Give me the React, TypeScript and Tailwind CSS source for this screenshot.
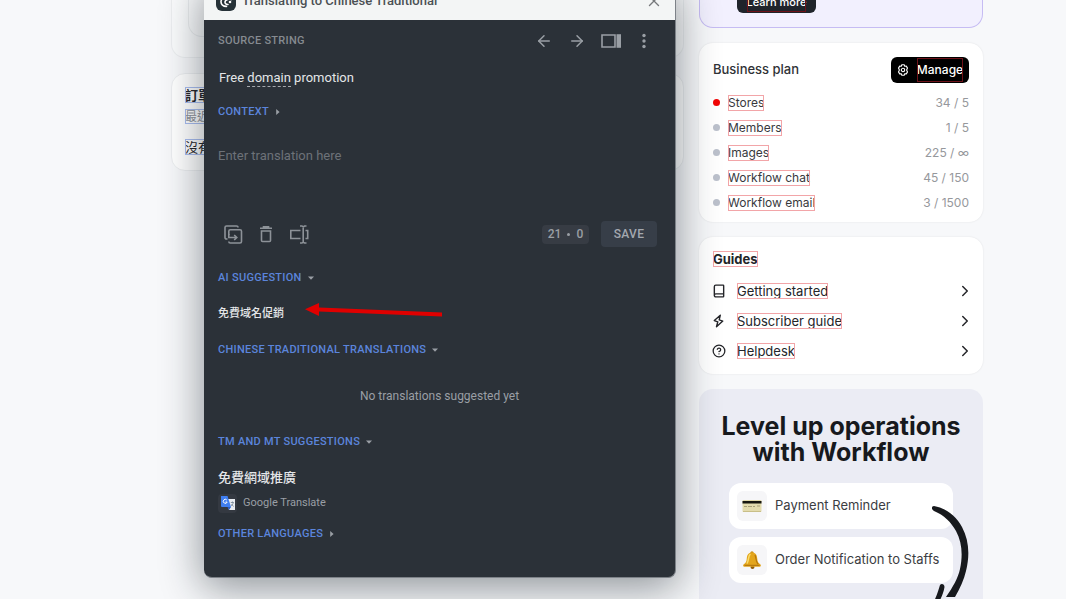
import type { ReactNode } from "react"
import { ArrowLeft, ArrowRight, Book, ChevronRight, CircleHelp, X } from "lucide-react"

interface Usage {
    name: string
    value: string
    over?: boolean
}

const usages: Usage[] = [
    { name: 'Stores', value: '34 / 5', over: true },
    { name: 'Members', value: '1 / 5' },
    { name: 'Images', value: '225 / ∞' },
    { name: 'Workflow chat', value: '45 / 150' },
    { name: 'Workflow email', value: '3 / 1500' },
]

const Bolt = () => (
    <svg className="w-3.5 h-3.5" viewBox="0 0 14 14" fill="none" stroke="currentColor" strokeWidth="1.400" strokeLinejoin="round">
        <path d="M8.300 1.200 2.300 6.600l3.500 1.200-1.300 4.900 6.300-5.600-3.600-1.200z" />
    </svg>
)

const guides = [
    { name: 'Getting started', icon: <Book className="w-3.5 h-3.5" strokeWidth={2.4} /> },
    { name: 'Subscriber guide', icon: <Bolt /> },
    { name: 'Helpdesk', icon: <CircleHelp className="w-3.5 h-3.5" strokeWidth={2.2} /> },
]

// Outline that the in-context editor puts round every string
const Untranslated = ({ children }: { children: ReactNode }) => (
    <span className="outline outline-1 -outline-offset-1 outline-[#f2a5a8] leading-4">{children}</span>
)

const Translated = ({ children }: { children: ReactNode }) => (
    <span className="outline outline-1 -outline-offset-1 outline-[#a9bdf0]">{children}</span>
)

const SectionToggle = ({ title, open, className }: { title: string, open?: boolean, className: string }) => (
    <button aria-expanded={!!open} className={`flex items-center gap-1.5 text-[11px] font-medium tracking-wide text-[#5b85dc] ${className}`}>
        {title}
        <svg className="w-1.5 h-1.5 text-[#9a9fa5]" viewBox="0 0 6 6" fill="currentColor">
            <path d={open ? 'M0 1.500h6L3 4.700z' : 'M1.200 0v6l3.400-3z'} />
        </svg>
    </button>
)

const EditorDialog = () => (
    <section role="dialog" aria-label="Translation editor" className="absolute z-10 -top-[18px] left-[33px] right-2 rounded-lg bg-[#2b3138] text-[#9a9fa5] font-[Roboto,'Noto_Sans_CJK_TC',sans-serif] shadow-[0_8px_40px_2px_rgba(20,30,40,0.46)] border-r border-b border-[#7d8288] overflow-hidden">
        <header className="h-[38px] bg-[#f3f5f5] flex items-center pl-3 pr-3">
            <span className="w-5 h-5 rounded-md bg-[#263238] flex items-center justify-center">
                <svg className="w-4 h-4" viewBox="0 0 16 16" fill="none">
                    <path d="M13 4.500C8.500 2.500 3.500 4.500 3 8.500c-.2 2.800 2.200 5 5.500 4.900" stroke="#fff" strokeWidth="1.600" strokeLinecap="round" />
                    <path d="M13.500 6.500C10 5.500 7 7 7 9.200c0 1.500 1.200 2.400 3 2.300" stroke="#fff" strokeWidth="1.600" strokeLinecap="round" />
                    <circle cx="12" cy="9" r="1.300" fill="#fff" />
                </svg>
            </span>
            <h1 className="ml-1.5 flex-1 text-[13px] font-medium text-[#4b5054]">Translating to Chinese Traditional</h1>
            <button aria-label="Close" className="text-[#77797c]"><X className="w-[18px] h-[18px]" strokeWidth={1.8} /></button>
        </header>

        <div className="h-[42px] pl-3.5 pr-[23px] flex items-center justify-between">
            <h2 className="text-[11px] font-medium tracking-wide text-[#868b91]">SOURCE STRING</h2>
            <div className="flex items-center gap-[15px]">
                <button aria-label="Previous"><ArrowLeft className="w-[18px] h-[18px]" strokeWidth={2} /></button>
                <button aria-label="Next"><ArrowRight className="w-[18px] h-[18px]" strokeWidth={2} /></button>
                <button aria-label="Toggle panel">
                    <svg className="w-5 h-3.5" viewBox="0 0 20 14">
                        <path d="M1 1h13v12H1z" fill="none" stroke="currentColor" strokeWidth="1.600" />
                        <path d="M15.500 .2H20v13.600h-4.500z" fill="currentColor" />
                    </svg>
                </button>
                <button aria-label="More" className="px-1.5">
                    <svg className="w-1 h-4" viewBox="0 0 4 16" fill="currentColor">
                        <circle cx="2" cy="2.500" r="1.700" />
                        <circle cx="2" cy="8" r="1.700" />
                        <circle cx="2" cy="13.500" r="1.700" />
                    </svg>
                </button>
            </div>
        </div>

        <p className="h-8 px-[15px] flex items-center text-[13px] leading-4 text-[#e4e6e8] whitespace-pre">
            Free <span className="-mb-px border-b border-dashed border-[#a5a9ae]">domain</span> promotion
        </p>
        <SectionToggle title="CONTEXT" className="h-9 px-3.5" />

        <textarea aria-label="Translation" placeholder="Enter translation here" className="block w-full h-[84px] px-3.5 pt-4 text-[13px] leading-5 resize-none bg-transparent outline-none placeholder:text-[#6d7278]" />

        <div className="h-10 pl-5 pr-[18px] flex items-center">
            <div className="flex items-center gap-[15px] text-[#8d9298]">
                <button aria-label="Copy source">
                    <svg className="w-[19px] h-[19px]" viewBox="0 0 19 19" fill="none" stroke="currentColor" strokeWidth="1.600">
                        <path d="M3.500 14H2.500A1.500 1.500 0 0 1 1 12.500v-10A1.500 1.500 0 0 1 2.500 1h10A1.500 1.500 0 0 1 14 2.500" />
                        <path d="M4.800 10V6.300a1.500 1.500 0 0 1 1.500-1.500h9.700a1.500 1.500 0 0 1 1.500 1.500v10.200A1.500 1.500 0 0 1 16 18H6.300a1.500 1.500 0 0 1-1.500-1.500" />
                        <path d="M4.800 9v3.500h8M10.200 10l2.600 2.500-2.600 2.500" />
                    </svg>
                </button>
                <button aria-label="Clear">
                    <svg className="w-4 h-[18px]" viewBox="0 0 16 18" fill="none" stroke="currentColor" strokeWidth="1.600">
                        <path d="M2 3.200h12M5.500 2.500V1.800h5v.7M3.500 6v9.500a1 1 0 0 0 1 1h7a1 1 0 0 0 1-1V6z" />
                    </svg>
                </button>
                <button aria-label="Select text">
                    <svg className="w-5 h-[19px]" viewBox="0 0 20 19" fill="none" stroke="currentColor" strokeWidth="1.600">
                        <path d="M11.500 5.500H1.800v8h9.700M16.500 5.500h2.200v8h-2.200M14.200 1.500v16M11 1h2l1.200 1 1.300-1h2M11 18h2l1.200-1 1.300 1h2" />
                    </svg>
                </button>
            </div>
            <span className="ml-auto w-[47px] h-[19px] rounded bg-[#373c44] flex items-center justify-center gap-1.5 text-xs font-medium">
                <span>21</span><span className="w-[3px] h-[3px] rounded-full bg-[#9a9fa5]" /><span>0</span>
            </span>
            <button className="ml-3 w-14 h-[26px] rounded-sm bg-[#373e48] text-xs font-medium tracking-wide text-[#a3a8af]">SAVE</button>
        </div>

        <SectionToggle title="AI SUGGESTION" open className="h-12 px-3.5" />
        <p className="h-6 px-3.5 flex items-center text-[11px] font-medium text-[#e4e6e8]">免費域名促銷</p>
        <SectionToggle title="CHINESE TRADITIONAL TRANSLATIONS" open className="h-12 px-3.5" />
        <p className="h-11 flex items-center justify-center text-xs">No translations suggested yet</p>
        <SectionToggle title="TM AND MT SUGGESTIONS" open className="h-12 px-3.5" />
        <p className="h-6 px-3.5 flex items-center text-[13px] font-medium text-[#e4e6e8]">免費網域推廣</p>
        <p className="h-[26px] px-3.5 flex items-center gap-1.5 text-[11px]">
            <span className="w-[19px] h-[19px] bg-[#343941] rounded-sm flex items-center justify-center">
                <svg className="w-3.5 h-3.5" viewBox="0 0 14 14">
                    <path d="M5 3h9v11H8z" fill="#e9edf2" />
                    <path d="M0 0h6.500L10 11H1a1 1 0 0 1-1-1z" fill="#3f7ef0" />
                    <path d="M6.500 11H10l-2 3z" fill="#2759c4" />
                    <path d="M5.800 4A2 2 0 1 0 6.200 6H4.500" fill="none" stroke="#fff" strokeWidth="1" />
                    <path d="M9.800 6.500h3M11.500 5.500v1M12.300 6.500c-.4 1.800-1.300 2.800-2.300 3.500M10.500 8l2 2.500" fill="none" stroke="#70808f" strokeWidth=".8" />
                </svg>
            </span>
            Google Translate
        </p>
        <SectionToggle title="OTHER LANGUAGES" className="h-9 px-3.5 mb-[25px]" />
    </section>
)

const PlanCard = () => (
    <section className="rounded-[14px] bg-white shadow-[0_0_2px_rgba(0,0,0,0.1)] px-3.5 pt-3.5 pb-[7px]">
        <div className="flex items-center justify-between">
            <h2 className="text-[13px] font-medium text-[#303236]">Business plan</h2>
            <button className="h-[26px] w-[78px] rounded-md bg-black text-white text-xs font-medium flex items-center justify-center gap-2">
                <svg className="w-3 h-3" viewBox="0 0 12 12" fill="none" stroke="currentColor" strokeWidth="1.100">
                    <path d="M4.800.8h2.400l.5 1.400 1.600-.1 1.200 2L9.600 6l.9 1.900-1.200 2-1.600-.1-.5 1.400H4.800l-.5-1.400-1.600.1-1.200-2L2.400 6l-.9-1.900 1.200-2 1.600.1z" strokeLinejoin="round" />
                    <circle cx="6" cy="6" r="1.700" />
                </svg>
                <span className="outline outline-1 -outline-offset-1 outline-[#6e1219] leading-6">Manage</span>
            </button>
        </div>
        <ul className="mt-[7px] text-xs text-[#38393d]">
            {usages.map((usage) => (
                <li key={usage.name} className="h-[25px] flex items-center">
                    <span className={`w-[7px] h-[7px] mr-2 rounded-full ${usage.over ? 'bg-[#f20505]' : 'bg-[#bcc1cc]'}`} />
                    <Untranslated>{usage.name}</Untranslated>
                    <span className="ml-auto text-[#96989c]">{usage.value}</span>
                </li>
            ))}
        </ul>
    </section>
)

const GuidesCard = () => (
    <section className="rounded-[14px] bg-white shadow-[0_0_2px_rgba(0,0,0,0.1)] px-3.5 pt-3 pb-2 text-[#242529]">
        <h2 className="text-[13px] leading-5 font-bold"><Untranslated>Guides</Untranslated></h2>
        <ul className="mt-[7px]">
            {guides.map((guide) => (
                <li key={guide.name}>
                    <a href="#" className="h-[30px] flex items-center text-[13px]">
                        <span className="w-[25px] flex -ml-px">{guide.icon}</span>
                        <Untranslated>{guide.name}</Untranslated>
                        <ChevronRight className="w-[18px] h-[18px] ml-auto -mr-[5px]" />
                    </a>
                </li>
            ))}
        </ul>
    </section>
)

const WorkflowCard = () => (
    <section className="relative h-60 rounded-[14px] bg-[#ebecf4] pt-6 px-[30px] flex flex-col">
        <h2 className="self-center text-[25px] leading-[26px] font-bold text-center text-[#17191d] whitespace-nowrap">
            Level up operations<br />with Workflow
        </h2>
        <div className="mt-[18px] space-y-2 text-[13px] text-[#3b3d42] whitespace-nowrap">
            <div className="h-[46px] rounded-xl bg-white flex items-center px-2 gap-2">
                <span className="w-[30px] h-[30px] shrink-0 rounded-md bg-[#f6f6f8] flex items-center justify-center">
                    <svg className="w-5 h-3.5" viewBox="0 0 20 14">
                        <rect x=".5" y="1" width="19" height="12" rx="1" fill="#e3dbad" />
                        <path d="M.5 2h19v2.500H.5z" fill="#17170f" />
                        <path d="M2 7.500h3M6 7.500h4M11 7.500h2M15 7h3" stroke="#a79f76" strokeWidth="1" />
                        <path d="M1 12.500h18" stroke="#c9bf88" strokeWidth="1" />
                    </svg>
                </span>
                Payment Reminder
            </div>
            <div className="h-[46px] rounded-xl bg-white flex items-center px-2 gap-2">
                <span className="w-[30px] h-[30px] shrink-0 rounded-md bg-[#f6f6f8] flex items-center justify-center">
                    <svg className="w-5 h-5" viewBox="0 0 20 20">
                        <circle cx="10" cy="2.800" r="1.600" fill="#c78a12" />
                        <circle cx="10.500" cy="17" r="2" fill="#8e5a0a" />
                        <path d="M10 2.500c3.600 0 5 2.600 5.200 5.800.2 3 .8 4.700 3.300 6.200.8.8.3 2.200-.8 2.300H2.300c-1.100-.1-1.600-1.500-.8-2.300C4 13 4.600 11.300 4.800 8.300 5 5.100 6.400 2.500 10 2.500z" fill="#e3a51c" />
                        <path d="M8 4.500C6.300 6 6.800 10 5.300 13" fill="none" stroke="#f9dc6b" strokeWidth="1.500" strokeLinecap="round" />
                        <path d="M13 5c1.300 3 .5 6 3 9" fill="none" stroke="#b5760b" strokeWidth="1.200" />
                        <path d="M2.500 15.300h15" stroke="#a8690a" strokeWidth=".9" />
                    </svg>
                </span>
                Order Notification to Staffs
            </div>
        </div>
        {/* hand drawn arrow running down the side of the steps */}
        <svg className="absolute right-3 top-[115px] w-10 h-[110px]" viewBox="0 0 40 110" fill="#17191d">
            <path d="M3 2C15 4 25 12 31 23c7 13 8 28 4 44-2 9-6 17-11 26h-9c7-10 12-19 14-28 3-14 2-27-4-38C20 18 13 11 3 7 0 5.500.5 2 3 2z" />
            <path d="M9 81c1.500-2 4.500-1 4.500 2-1 7-4 12-7 18H1c4-7 6-13 8-20z" />
        </svg>
    </section>
)

export default function App() {
    return (
        <div className="h-screen overflow-hidden bg-[#f7f8fa] font-[Inter,'Noto_Sans_CJK_TC',sans-serif]">
            <div className="flex gap-[15px] pl-[171px] pr-[83px]">
                <main className="relative flex-1 min-w-0">
                    <div className="h-[58px] rounded-b-[14px] border border-t-0 border-[#eceef0] bg-[#fafbfc] px-4">
                        <div className="h-[37px] rounded-b-[14px] border border-t-0 border-[#eaecee]" />
                    </div>
                    <div className="mt-[15px] h-[98px] rounded-[14px] border border-[#eceef0] bg-white px-[13px] pt-[13px] text-[13px] leading-4">
                        <h2 className="font-bold text-[#242529]"><Translated>訂單</Translated></h2>
                        <p className="mt-1.5 text-xs leading-4 text-[#8e9299]"><Translated>最近</Translated></p>
                        <p className="mt-[14px] text-[#242529]"><Translated>沒有</Translated></p>
                    </div>
                    <EditorDialog />
                    <svg className="absolute z-20 left-[134px] top-[302px] w-[138px] h-4" viewBox="0 0 138 16" fill="#e00000">
                        <path d="M0 7.300 14 1v4.500l123 5v4l-123-5V14z" />
                    </svg>
                </main>

                <aside className="w-[284px] shrink-0 flex flex-col gap-[15px]">
                    <section className="h-7 rounded-b-[14px] border border-t-0 border-[#c6bcf3] bg-[#f2f0fe] px-[37px] flex items-start">
                        <button className="-mt-[9px] w-[79px] h-[22px] rounded-md bg-[#20242b] text-white text-[11px] font-medium flex items-center justify-center">
                            <span className="outline outline-1 -outline-offset-1 outline-[#6e1219] leading-5">Learn more</span>
                        </button>
                    </section>
                    <PlanCard />
                    <GuidesCard />
                    <WorkflowCard />
                </aside>
            </div>
        </div>
    )
}
